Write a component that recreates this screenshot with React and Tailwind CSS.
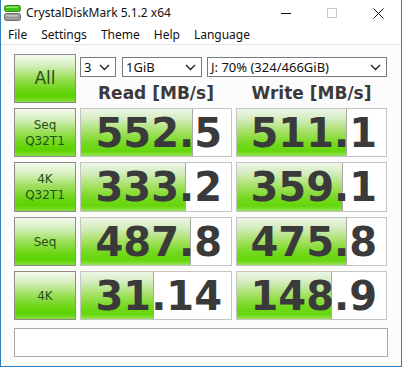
import React from "react";

const rows = [
  { label: ["Seq", "Q32T1"], read: "552.5", readW: 112, write: "511.1", writeW: 110 },
  { label: ["4K", "Q32T1"], read: "333.2", readW: 105, write: "359.1", writeW: 106 },
  { label: ["Seq"], read: "487.8", readW: 110, write: "475.8", writeW: 110 },
  { label: ["4K"], read: "31.14", readW: 73, write: "148.9", writeW: 95 },
];

const btnBg =
  "bg-[linear-gradient(to_bottom,#f4faee_0%,#d6efbe_22%,#9fe05e_48%,#70d61a_72%,#5cd200_88%,#86de3c_100%)]";
const barBg =
  "bg-[linear-gradient(to_bottom,#eef6e8_0%,#d3ecbd_22%,#a2e05e_50%,#72d81c_75%,#66d60c_90%,#9be45a_100%)]";

const Chevron = () => (
  <svg width="11" height="7" viewBox="0 0 11 7" className="shrink-0">
    <path d="M1 1 L5.5 5.5 L10 1" fill="none" stroke="#222" strokeWidth="1.4" />
  </svg>
);

const Select = ({ w, text }) => (
  <div className={`${w} h-[20px] border border-[#7a7a7a] bg-white flex items-center justify-between pl-[3px] pr-[5px] text-[13px] text-[#111] leading-none`}>
    <span>{text}</span>
    <Chevron />
  </div>
);

const TestButton = ({ lines, big }) => (
  <div className={`border border-[#8c8c8c] ${btnBg} flex flex-col items-center justify-center font-['DejaVu_Sans',sans-serif] ${big ? "text-[17px]" : "text-[12px] leading-[16px]"}`}>
    {lines.map((l) => (
      <span key={l} className="[color:#26501a]">
        {l}
      </span>
    ))}
  </div>
);

const Value = ({ text, width }) => (
  <div className="relative border border-[#c4c4c4] bg-white overflow-hidden">
    <div className={`absolute inset-y-0 left-0 border-r border-[#a8a8a8] ${barBg}`} style={{ width }} />
    <div className="relative h-full flex items-center justify-end pr-[9px] font-['DejaVu_Sans',sans-serif] font-bold text-[40px] leading-none text-[#3a3a3a]">
      {text}
    </div>
  </div>
);

const AppIcon = () => (
  <svg width="17" height="16" viewBox="0 0 17 16">
    <rect x="0.5" y="0.5" width="16" height="6" rx="2" fill="#3fc21a" stroke="#2c8a12" />
    <rect x="2" y="1.5" width="12" height="1.5" rx="0.7" fill="#8fe36a" />
    <rect x="0.5" y="8.5" width="16" height="7" rx="2" fill="#9a9a9a" stroke="#6e6e6e" />
    <rect x="2" y="10" width="12" height="1.5" rx="0.7" fill="#c4c4c4" />
  </svg>
);

const App = () => {
  return (
    <div className="w-[402px] h-[367px] bg-white flex flex-col border-x border-b border-[#2f7ec0] font-['Noto_Sans',sans-serif] overflow-hidden">
      <div className="h-[26px] flex items-center shrink-0">
        <div className="pl-[3px] pr-[5px] flex items-center">
          <AppIcon />
        </div>
        <span className="text-[12px] text-[#111]">CrystalDiskMark 5.1.2 x64</span>
        <div className="ml-auto flex h-full">
          <div className="w-[46px] flex items-center justify-center">
            <div className="w-[10px] h-px bg-[#111]" />
          </div>
          <div className="w-[46px] flex items-center justify-center">
            <div className="w-[10px] h-[10px] border border-[#c8c8c8]" />
          </div>
          <div className="w-[46px] flex items-center justify-center">
            <svg width="11" height="11" viewBox="0 0 11 11">
              <path d="M0.5 0.5 L10.5 10.5 M10.5 0.5 L0.5 10.5" stroke="#111" strokeWidth="1" />
            </svg>
          </div>
        </div>
      </div>

      <div className="h-[19px] flex items-center gap-[14px] pl-[7px] text-[12px] text-[#111] border-b border-[#e6e6e6] shrink-0">
        <span>File</span>
        <span>Settings</span>
        <span>Theme</span>
        <span>Help</span>
        <span>Language</span>
      </div>

      <div className="flex-1 bg-[#fcfcfc] pl-[13px] pt-[9px]">
        <div className="grid grid-cols-[62px_152px_151px] grid-rows-[49px_49px_50px_49px_49px] gap-x-[4px] gap-y-[5px]">
          <TestButton lines={["All"]} big />
          <div className="col-span-2 flex flex-col">
            <div className="flex mt-[3px]">
              <Select w="w-[36px]" text="3" />
              <div className="ml-[6px]">
                <Select w="w-[80px]" text="1GiB" />
              </div>
              <div className="ml-[5px]">
                <Select w="w-[180px]" text="J: 70% (324/466GiB)" />
              </div>
            </div>
            <div className="grid grid-cols-[152px_151px] gap-x-[4px] mt-[6px] font-['DejaVu_Sans',sans-serif] font-bold text-[17px] leading-[20px] text-[#3a3a3a] text-center">
              <span>Read [MB/s]</span>
              <span>Write [MB/s]</span>
            </div>
          </div>
          {rows.map((r) => (
            <React.Fragment key={r.read}>
              <TestButton lines={r.label} />
              <Value text={r.read} width={r.readW} />
              <Value text={r.write} width={r.writeW} />
            </React.Fragment>
          ))}
        </div>
        <div className="mt-[8px] w-[374px] h-[29px] border border-[#a8a8a8] bg-white" />
      </div>
    </div>
  );
};

export default App;
